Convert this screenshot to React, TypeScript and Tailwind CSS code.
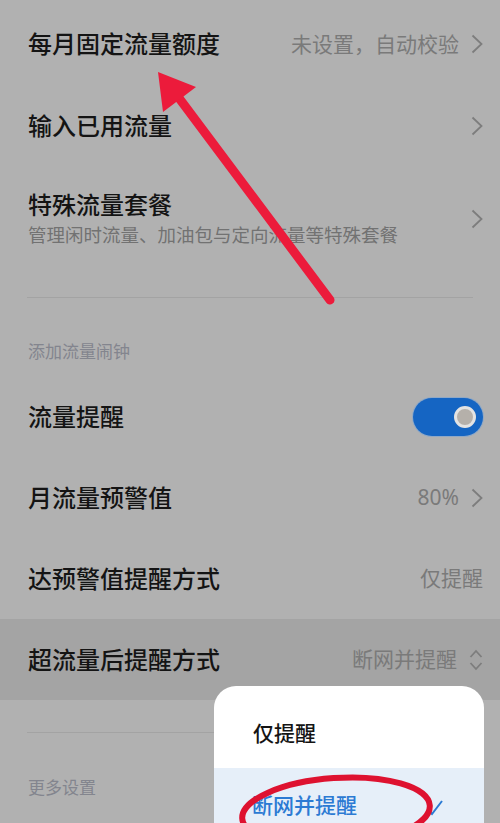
import type { ReactNode } from "react";

const FONT = { fontFamily: '"Noto Sans", "Noto Sans CJK SC", sans-serif' };

function Chevron() {
  return (
    <svg width="12" height="20" viewBox="0 0 12 20" className="ml-[12px] shrink-0">
      <path d="M1.5 1.5 L10.5 10 L1.5 18.5" fill="none" stroke="#7d7d7d" strokeWidth="1.8" />
    </svg>
  );
}

function UpDown() {
  return (
    <svg width="14" height="24" viewBox="0 0 14 24" className="ml-[12px] shrink-0">
      <path d="M1.5 9 L7 3 L12.5 9 M1.5 15 L7 21 L12.5 15" fill="none" stroke="#7d7d7d" strokeWidth="1.8" />
    </svg>
  );
}

function Row({
  title,
  value,
  right,
  className = "",
}: {
  title: string;
  value?: string;
  right?: ReactNode;
  className?: string;
}) {
  return (
    <div className={`flex h-[81px] items-center justify-between pl-[28px] pr-[17px] ${className}`}>
      <span className="text-[24px] font-medium leading-none text-[#141414]">{title}</span>
      <div className="flex items-center">
        {value && <span className="text-[21px] leading-none text-[#7a7a7a]">{value}</span>}
        {right}
      </div>
    </div>
  );
}

export default function App() {
  return (
    <div className="relative h-[823px] w-[500px] overflow-hidden bg-[#b1b1b1]" style={FONT}>
      <div className="pt-[3px]">
        <Row title="每月固定流量额度" value="未设置，自动校验" right={<Chevron />} className="h-[82px]" />
        <Row title="输入已用流量" right={<Chevron />} className="h-[82px]" />
        <div className="flex h-[104px] items-center justify-between pl-[28px] pr-[17px]">
          <div>
            <p className="text-[24px] font-medium leading-none text-[#141414]">特殊流量套餐</p>
            <p className="mt-[9px] text-[18.5px] leading-none text-[#727272]">
              管理闲时流量、加油包与定向流量等特殊套餐
            </p>
          </div>
          <Chevron />
        </div>
      </div>

      <div className="mx-[27px] mt-[26px] h-px bg-[#a3a3a3]" />

      <p className="pl-[28px] pt-[44px] pb-[14px] text-[17px] leading-[20px] text-[#83858e]">添加流量闹钟</p>

      <Row
        title="流量提醒"
        right={
          <div className="flex h-[38px] w-[70px] items-center justify-end rounded-full bg-[#1565c3] pr-[7px] ring-1 ring-[#8fa8c6]">
            <div className="h-[22px] w-[22px] rounded-full border-[3px] border-[#e3e3e3] bg-[#b5b0aa]" />
          </div>
        }
      />
      <Row title="月流量预警值" value="80%" right={<Chevron />} />
      <Row title="达预警值提醒方式" value="仅提醒" />
      <Row title="超流量后提醒方式" value="断网并提醒" right={<UpDown />} className="bg-[#a4a4a4]" />

      <div className="mx-[27px] mt-[32px] h-px bg-[#a3a3a3]" />
      <p className="pl-[28px] pt-[45px] text-[17px] leading-[20px] text-[#83858e]">更多设置</p>

      {/* popup menu */}
      <div className="absolute left-[214px] top-[686px] w-[270px] overflow-hidden rounded-[22px] bg-white">
        <div className="h-[82px] pl-[39px] pt-[36px]">
          <span className="text-[21px] font-medium leading-[22px] text-[#141414]">仅提醒</span>
        </div>
        <div className="flex h-[82px] items-start justify-between bg-[#e6eff9] pl-[38px] pr-[40px] pt-[26px]">
          <span className="text-[21px] font-medium leading-[22px] text-[#2b7ad3]">断网并提醒</span>
          <svg width="18" height="18" viewBox="0 0 18 18" className="mt-[4px]">
            <path d="M2 12 L6 16 L16 3" fill="none" stroke="#2b7ad3" strokeWidth="2" />
          </svg>
        </div>
      </div>

      {/* annotations */}
      <svg className="pointer-events-none absolute inset-0" width="500" height="823" viewBox="0 0 500 823">
        <line x1="330" y1="300" x2="170" y2="86" stroke="#ec1b3b" strokeWidth="9" strokeLinecap="round" />
        <polygon points="158,72 163,112 196,87" fill="#ec1b3b" />
        <ellipse
          cx="336"
          cy="812"
          rx="94"
          ry="34"
          fill="none"
          stroke="#de1230"
          strokeWidth="6"
          transform="rotate(-4 336 812)"
        />
      </svg>
    </div>
  );
}
